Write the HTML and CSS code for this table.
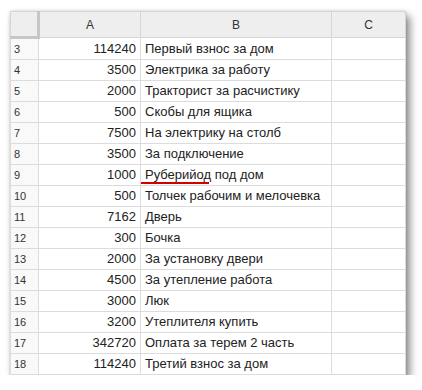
FILE: index.html
```html
<!DOCTYPE html>
<html lang="ru">
<head>
<meta charset="utf-8">
<link rel="stylesheet" href="styles.css">
</head>
<body>
<div class="page">
  <table class="sheet">
    <colgroup>
      <col class="c-num"><col class="c-a"><col class="c-b"><col class="c-c">
    </colgroup>
    <thead>
      <tr>
        <th class="corner"></th>
        <th class="colh">A</th>
        <th class="colh">B</th>
        <th class="colh">C</th>
      </tr>
    </thead>
    <tbody>
      <tr><td class="rn">3</td><td class="num">114240</td><td class="txt">Первый взнос за дом</td><td></td></tr>
      <tr><td class="rn">4</td><td class="num">3500</td><td class="txt">Электрика за работу</td><td></td></tr>
      <tr><td class="rn">5</td><td class="num">2000</td><td class="txt">Тракторист за расчистику</td><td></td></tr>
      <tr><td class="rn">6</td><td class="num">500</td><td class="txt">Скобы для ящика</td><td></td></tr>
      <tr><td class="rn">7</td><td class="num">7500</td><td class="txt">На электрику на столб</td><td></td></tr>
      <tr><td class="rn">8</td><td class="num">3500</td><td class="txt">За подключение</td><td></td></tr>
      <tr><td class="rn">9</td><td class="num">1000</td><td class="txt"><span class="spell">Руберийод</span> под дом</td><td></td></tr>
      <tr><td class="rn">10</td><td class="num">500</td><td class="txt">Толчек рабочим и мелочевка</td><td></td></tr>
      <tr><td class="rn">11</td><td class="num">7162</td><td class="txt">Дверь</td><td></td></tr>
      <tr><td class="rn">12</td><td class="num">300</td><td class="txt">Бочка</td><td></td></tr>
      <tr><td class="rn">13</td><td class="num">2000</td><td class="txt">За установку двери</td><td></td></tr>
      <tr><td class="rn">14</td><td class="num">4500</td><td class="txt">За утепление работа</td><td></td></tr>
      <tr><td class="rn">15</td><td class="num">3000</td><td class="txt">Люк</td><td></td></tr>
      <tr><td class="rn">16</td><td class="num">3200</td><td class="txt">Утеплителя купить</td><td></td></tr>
      <tr><td class="rn">17</td><td class="num">342720</td><td class="txt">Оплата за терем 2 часть</td><td></td></tr>
      <tr><td class="rn">18</td><td class="num">114240</td><td class="txt">Третий взнос за дом</td><td></td></tr>
    </tbody>
  </table>
</div>
</body>
</html>
```
FILE: styles.css
```css
html, body {
  margin: 0;
  padding: 0;
  background: #fff;
}
.page {
  padding: 11px 0 0 10px;
}
.sheet {
  border-collapse: collapse;
  table-layout: fixed;
  width: 395px;
  font-family: Arial, "Liberation Sans", sans-serif;
  font-size: 13px;
  color: #222;
  background: #fff;
  box-shadow: 4px 5px 8px rgba(0,0,0,0.45), 0 0 3px rgba(0,0,0,0.15);
  border: 1px solid #d0d0d0;
}
.c-num { width: 28px; }
.c-a { width: 102px; }
.c-b { width: 191px; }
.c-c { width: 74px; }
.sheet th, .sheet td {
  border: 1px solid #dcdcdc;
  padding: 0 4px;
  height: 20px;
  line-height: 20px;
  white-space: nowrap;
  overflow: hidden;
}
.sheet th {
  height: 24px;
  background: #eeeeee;
  font-weight: normal;
  font-size: 12px;
  color: #333;
  text-align: center;
  border-color: #d6d6d6;
}
.sheet th.corner {
  background: #eeeeee;
  border-right: 3px solid #c6c6c6;
  border-bottom: 3px solid #c6c6c6;
}
.rn {
  background: #f9f9f9;
  font-size: 11px;
  color: #333;
  text-align: left;
  padding-left: 3px !important;
}
.num {
  text-align: right;
}
.txt {
  text-align: left;
}
.spell {
  position: relative;
}
.spell::after {
  content: "";
  position: absolute;
  left: -5px;
  right: 2px;
  bottom: -2px;
  height: 2px;
  background: #d40000;
}
```
